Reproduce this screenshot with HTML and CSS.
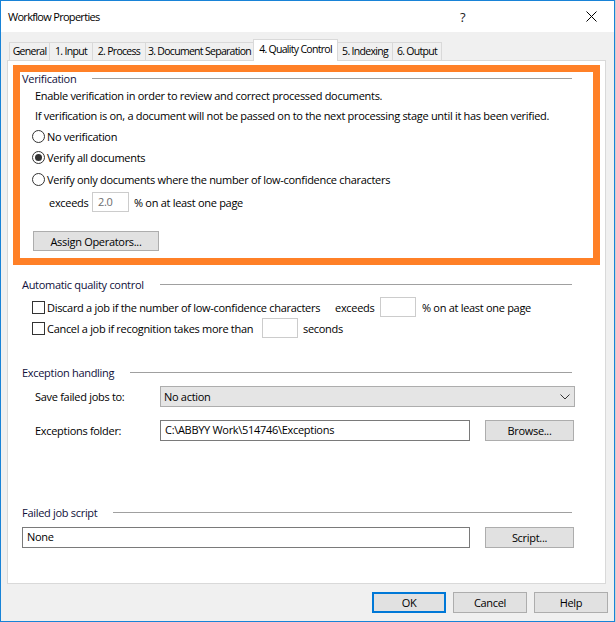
FILE: index.html
```html
<!DOCTYPE html>
<html lang="en">
<head>
    <meta charset="UTF-8">
    <title>Workflow Properties</title>
    <link rel="stylesheet" href="styles.css">
</head>
<body>
    <div class="window">
        <div class="titlebar">
            <span class="title">Workflow Properties</span>
            <span class="help-btn">?</span>
            <span class="close-btn">
                <svg width="11" height="11" viewBox="0 0 11 11"><path d="M0.5 0.5 L10.5 10.5 M10.5 0.5 L0.5 10.5" stroke="#000" stroke-width="1" fill="none"/></svg>
            </span>
        </div>

        <div class="dialog-body">
            <!-- Tabs -->
            <div class="tabs">
                <div class="tab tab-general">General</div>
                <div class="tab tab-input">1. Input</div>
                <div class="tab tab-process">2. Process</div>
                <div class="tab tab-separation">3. Document Separation</div>
                <div class="tab tab-quality active">4. Quality Control</div>
                <div class="tab tab-indexing">5. Indexing</div>
                <div class="tab tab-output">6. Output</div>
            </div>

            <div class="panel">
                <!-- Verification (highlighted) -->
                <div class="highlight">
                    <div class="group-title"><span>Verification</span><span class="rule"></span></div>
                    <div class="text-row first">Enable verification in order to review and correct processed documents.</div>
                    <div class="text-row">If verification is on, a document will not be passed on to the next processing stage until it has been verified.</div>
                    <div class="option"><span class="radio"></span>No verification</div>
                    <div class="option second"><span class="radio checked"></span>Verify all documents</div>
                    <div class="option third"><span class="radio"></span>Verify only documents where the number of low-confidence characters</div>
                    <div class="exceeds-row">
                        <span class="exceeds-label">exceeds</span>
                        <span class="field disabled small">2.0</span>
                        <span class="after-field">% on at least one page</span>
                    </div>
                    <button class="btn assign-btn">Assign Operators...</button>
                </div>

                <!-- Automatic quality control -->
                <div class="group auto-group">
                    <div class="group-title"><span>Automatic quality control</span><span class="rule"></span></div>
                    <div class="check-row first">
                        <span class="checkbox"></span>
                        <span class="check-label discard-label">Discard a job if the number of low-confidence characters</span>
                        <span class="mid-label">exceeds</span>
                        <span class="field disabled tiny"></span>
                        <span class="after-field wide">% on at least one page</span>
                    </div>
                    <div class="check-row">
                        <span class="checkbox"></span>
                        <span class="check-label cancel-label">Cancel a job if recognition takes more than</span>
                        <span class="field disabled tiny"></span>
                        <span class="after-field">seconds</span>
                    </div>
                </div>

                <!-- Exception handling -->
                <div class="group exception-group">
                    <div class="group-title"><span>Exception handling</span><span class="rule"></span></div>
                    <div class="form-row save-row">
                        <span class="form-label">Save failed jobs to:</span>
                        <div class="select">
                            <span>No action</span>
                            <svg width="10" height="6" viewBox="0 0 10 6"><path d="M0.5 0.5 L5 5 L9.5 0.5" stroke="#333" stroke-width="1" fill="none"/></svg>
                        </div>
                    </div>
                    <div class="form-row folder-row">
                        <span class="form-label">Exceptions folder:</span>
                        <span class="field path-field">C:\ABBYY Work\514746\Exceptions</span>
                        <button class="btn side-btn">Browse...</button>
                    </div>
                </div>

                <!-- Failed job script -->
                <div class="group script-group">
                    <div class="group-title"><span>Failed job script</span><span class="rule"></span></div>
                    <div class="form-row script-row">
                        <span class="field script-field">None</span>
                        <button class="btn side-btn">Script...</button>
                    </div>
                </div>
            </div>

            <div class="footer">
                <button class="btn footer-btn default">OK</button>
                <button class="btn footer-btn">Cancel</button>
                <button class="btn footer-btn">Help</button>
            </div>
        </div>
    </div>
</body>
</html>
```

FILE: styles.css
```css
* {
    box-sizing: border-box;
}

body {
    margin: 0;
    width: 616px;
    height: 622px;
    overflow: hidden;
    background: #cfcfcf;
    font-family: "Open Sans", "Segoe UI", sans-serif;
    font-size: 11px;
    letter-spacing: -0.3px;
    color: #000;
}

.window {
    width: 615px;
    height: 622px;
    border: 1px solid #1883d7;
    background: #f0f0f0;
    display: flex;
    flex-direction: column;
}

/* Title bar */
.titlebar {
    height: 31px;
    background: #fff;
    display: flex;
    align-items: center;
    padding-left: 7px;
}

.title {
    font-size: 11px;
    letter-spacing: -0.7px;
    flex: 1;
}

.help-btn {
    font-size: 13px;
    width: 126px;
    color: #222;
}

.close-btn {
    width: 28px;
    display: flex;
    align-items: center;
}

.close-btn svg {
    display: block;
}

/* Tabs */
.dialog-body {
    flex: 1;
}

.tabs {
    display: flex;
    align-items: flex-end;
    height: 28px;
    padding-left: 8px;
}

.tab {
    height: 18px;
    line-height: 17px;
    font-size: 10.5px;
    letter-spacing: -0.7px;
    text-align: center;
    white-space: nowrap;
    border: 1px solid #d9d9d9;
    border-bottom: none;
    background: #f0f0f0;
    margin-left: -1px;
    flex-shrink: 0;
}

.tab:first-child {
    margin-left: 0;
}

.tab.active {
    height: 22px;
    line-height: 18px;
    background: #fff;
    margin-bottom: -1px;
    position: relative;
    z-index: 1;
}

.tab-general { width: 41px; }
.tab-input { width: 44px; }
.tab-process { width: 54px; }
.tab-separation { width: 109px; }
.tab-quality { width: 85px; }
.tab-indexing { width: 56px; }
.tab-output { width: 50px; }

/* Panel */
.panel {
    margin-left: 6px;
    width: 599px;
    height: 524px;
    background: #fff;
    border: 1px solid #d9d9d9;
}

.highlight {
    margin: 4px 0 0 5px;
    width: 587px;
    height: 200px;
    border: 7px solid #ff8027;
    padding-left: 2px;
}

.group-title {
    width: 550px;
    height: 14px;
    display: flex;
    align-items: center;
    gap: 16px;
    color: #10103a;
    white-space: nowrap;
}

.highlight .group-title {
    margin-top: -1px;
}

.group-title .rule {
    flex: 1;
    height: 1px;
    background: #a0a0a0;
}

.text-row {
    margin-left: 13px;
    height: 20px;
    line-height: 20px;
    white-space: nowrap;
}

.text-row.first {
    margin-top: 1px;
}

.option {
    margin-left: 10px;
    height: 20px;
    display: flex;
    align-items: center;
    gap: 2px;
    white-space: nowrap;
}

.option.second { margin-top: 1px; }
.option.third { margin-top: 2px; }

.radio {
    width: 13px;
    height: 13px;
    border: 1px solid #333;
    border-radius: 50%;
    background: #fff;
    display: flex;
    align-items: center;
    justify-content: center;
    flex-shrink: 0;
}

.radio.checked::after {
    content: "";
    width: 7px;
    height: 7px;
    border-radius: 50%;
    background: #333;
}

.exceeds-row {
    margin: 3px 0 0 27px;
    height: 20px;
    display: flex;
    align-items: center;
}

.exceeds-label {
    width: 43px;
}

.field {
    height: 20px;
    line-height: 18px;
    border: 1px solid #7a7a7a;
    background: #fff;
    padding-left: 4px;
    white-space: nowrap;
}

.field.disabled {
    border-color: #ccc;
    color: #6d6d6d;
}

.field.small { width: 37px; padding-left: 5px; }
.field.tiny { width: 36px; }

.after-field {
    margin-left: 5px;
    white-space: nowrap;
}

.after-field.wide {
    margin-left: 6px;
}

.btn {
    font-family: inherit;
    font-size: 11px;
    letter-spacing: inherit;
    color: #000;
    background: #e1e1e1;
    border: 1px solid #adadad;
    padding: 0;
    height: 21px;
    line-height: 19px;
    text-align: center;
}

.assign-btn {
    display: block;
    margin: 19px 0 0 11px;
    width: 126px;
    height: 20px;
}

/* Groups below highlight */
.group {
    margin-left: 14px;
}

.auto-group { margin-top: 12px; }
.exception-group { margin-top: 27px; }
.script-group { margin-top: 64px; }

.check-row {
    margin: 1px 0 0 10px;
    height: 20px;
    display: flex;
    align-items: center;
    white-space: nowrap;
}

.check-row.first {
    margin-top: 6px;
}

.checkbox {
    width: 13px;
    height: 13px;
    border: 1px solid #333;
    background: #fff;
    flex-shrink: 0;
}

.check-label {
    margin-left: 2px;
}

.discard-label { width: 288px; }
.cancel-label { width: 215px; }

.mid-label { width: 45px; }

.form-row {
    display: flex;
    align-items: center;
    height: 21px;
    white-space: nowrap;
}

.save-row { margin-top: 7px; }
.folder-row { margin-top: 13px; }
.script-row { margin-top: 8px; }

.form-label {
    width: 138px;
    padding-left: 13px;
}

.select {
    width: 415px;
    height: 21px;
    background: #e5e5e5;
    border: 1px solid #adadad;
    display: flex;
    align-items: center;
    justify-content: space-between;
    padding: 0 4px 0 3px;
}

.select svg {
    display: block;
}

.path-field {
    width: 310px;
    height: 21px;
    padding-left: 4px;
}

.script-field {
    width: 448px;
    height: 21px;
    padding-left: 4px;
}

.side-btn {
    width: 89px;
    margin-left: 15px;
}

/* Footer */
.footer {
    display: flex;
    justify-content: flex-end;
    gap: 7px;
    margin-top: 8px;
    padding-right: 6px;
}

.footer-btn {
    width: 74px;
}

.footer-btn.default {
    border: 2px solid #0078d7;
    line-height: 17px;
}
```
